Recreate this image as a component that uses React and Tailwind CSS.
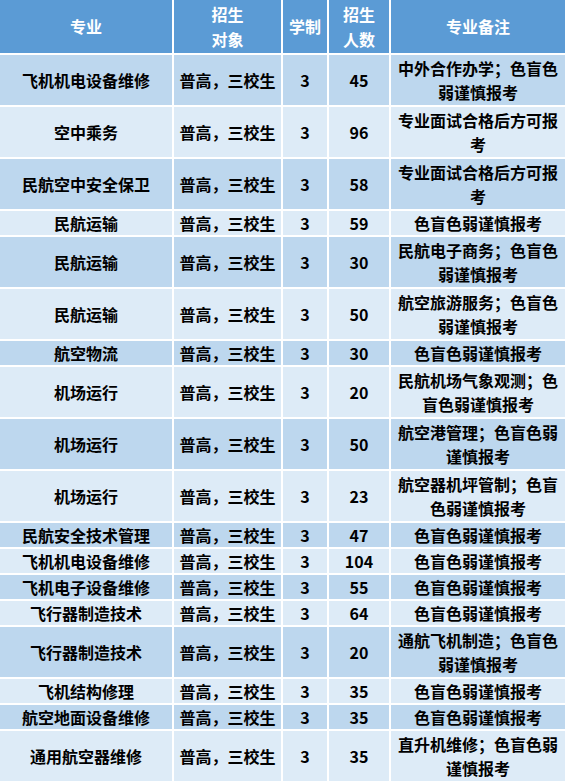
const rows = [
  ['飞机机电设备维修', '普高，三校生', '3', '45', '中外合作办学；色盲色弱谨慎报考', 2],
  ['空中乘务', '普高，三校生', '3', '96', '专业面试合格后方可报考', 2],
  ['民航空中安全保卫', '普高，三校生', '3', '58', '专业面试合格后方可报考', 2],
  ['民航运输', '普高，三校生', '3', '59', '色盲色弱谨慎报考', 1],
  ['民航运输', '普高，三校生', '3', '30', '民航电子商务；色盲色弱谨慎报考', 2],
  ['民航运输', '普高，三校生', '3', '50', '航空旅游服务；色盲色弱谨慎报考', 2],
  ['航空物流', '普高，三校生', '3', '30', '色盲色弱谨慎报考', 1],
  ['机场运行', '普高，三校生', '3', '20', '民航机场气象观测；色盲色弱谨慎报考', 2],
  ['机场运行', '普高，三校生', '3', '50', '航空港管理；色盲色弱谨慎报考', 2],
  ['机场运行', '普高，三校生', '3', '23', '航空器机坪管制；色盲色弱谨慎报考', 2],
  ['民航安全技术管理', '普高，三校生', '3', '47', '色盲色弱谨慎报考', 1],
  ['飞机机电设备维修', '普高，三校生', '3', '104', '色盲色弱谨慎报考', 1],
  ['飞机电子设备维修', '普高，三校生', '3', '55', '色盲色弱谨慎报考', 1],
  ['飞行器制造技术', '普高，三校生', '3', '64', '色盲色弱谨慎报考', 1],
  ['飞行器制造技术', '普高，三校生', '3', '20', '通航飞机制造；色盲色弱谨慎报考', 2],
  ['飞机结构修理', '普高，三校生', '3', '35', '色盲色弱谨慎报考', 1],
  ['航空地面设备维修', '普高，三校生', '3', '35', '色盲色弱谨慎报考', 1],
  ['通用航空器维修', '普高，三校生', '3', '35', '直升机维修；色盲色弱谨慎报考', 2],
]

const headers = ['专业', '招生对象', '学制', '招生人数', '专业备注']

export default function App() {
  return (
    <div
      className="w-[565px] h-[782px] bg-white grid grid-cols-[172px_107px_44px_60px_1fr] gap-[2px] content-start text-[16px] leading-[24px] text-black font-semibold"
      style={{ fontFamily: '"Noto Sans CJK SC", "Noto Sans", sans-serif' }}
    >
      {headers.map((h) => (
        <div
          key={h}
          className="h-[53px] bg-[#5b9bd5] text-white font-bold flex items-center justify-center text-center px-[6px] leading-[25px]"
        >
          {h === '招生对象' ? <span>招生<br />对象</span> : h === '招生人数' ? <span>招生<br />人数</span> : h}
        </div>
      ))}
      {rows.map((r, i) => {
        const bg = i % 2 === 0 ? 'bg-[#bdd7ee]' : 'bg-[#ddebf7]'
        const h = r[5] === 2 ? 'h-[50px]' : 'h-[24px]'
        return r.slice(0, 5).map((c, j) => (
          <div
            key={i + '-' + j}
            className={`${bg} ${h} flex items-center justify-center text-center ${j === 4 ? 'px-[6px]' : ''}`}
          >
            {c}
          </div>
        ))
      })}
    </div>
  )
}
